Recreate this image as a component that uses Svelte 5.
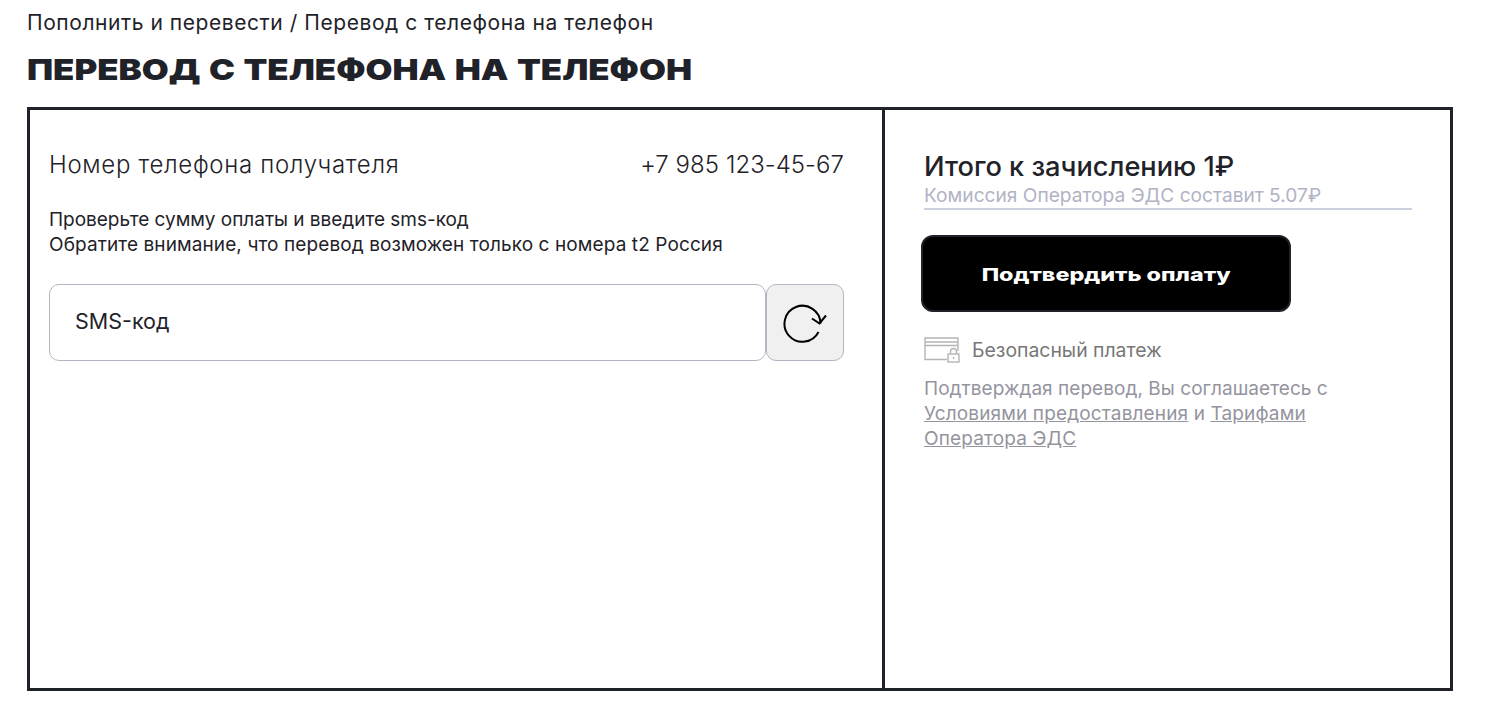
<script>
	let code = '';
</script>

<div class="page">
	<div class="crumbs">Пополнить и перевести / Перевод с телефона на телефон</div>
	<h1><span>ПЕРЕВОД С ТЕЛЕФОНА НА ТЕЛЕФОН</span></h1>

	<div class="box">
		<div class="left">
			<div class="phone-row">
				<span class="label">Номер телефона получателя</span>
				<span class="number">+7 985 123-45-67</span>
			</div>
			<p class="hint">
				<span class="first">Проверьте сумму оплаты и введите sms-код</span><br />
				Обратите внимание, что перевод возможен только с номера t2 Россия
			</p>
			<div class="sms">
				<input type="text" placeholder="SMS-код" bind:value={code} />
				<button class="refresh" aria-label="Отправить код повторно">
					<svg width="44" height="40" viewBox="0 0 44 40" fill="none" stroke="#000" stroke-width="2">
						<path d="M37.5 20.5 A18 18 0 1 0 35.5 29" />
						<path d="M29 15.5 L36.5 20.5 L43 12.5" />
					</svg>
				</button>
			</div>
		</div>

		<div class="right">
			<div class="total">Итого к зачислению 1₽</div>
			<div class="fee">Комиссия Оператора ЭДС составит 5.07₽</div>
			<button class="confirm"><span>Подтвердить оплату</span></button>
			<div class="secure">
				<svg width="36" height="26" viewBox="0 0 36 26" fill="none" stroke="#b5b5b5" stroke-width="1.4">
					<path d="M23 22.5 H1 V1 H34 V14" />
					<path d="M1 5 H34 M1 8.5 H34" />
					<rect x="24" y="17" width="11" height="8" fill="#fff" />
					<path d="M26.5 17 V14.5 a3 3 0 0 1 6 0 V17" />
					<path d="M29.5 20 v2" />
				</svg>
				<span>Безопасный платеж</span>
			</div>
			<p class="terms">
				Подтверждая перевод, Вы соглашаетесь с
				<a href="#terms">Условиями предоставления</a> и <a href="#tariffs">Тарифами Оператора ЭДС</a>
			</p>
		</div>
	</div>
</div>

<style>
	:global(body) {
		margin: 0;
		background: #fff;
	}

	.page {
		padding: 10px 47px 23px 27px;
		color: #1f2229;
		font-family: Inter, 'Noto Sans', sans-serif;
	}

	.crumbs {
		font-size: 21px;
		line-height: 26px;
		letter-spacing: 0.56px;
	}

	h1 {
		margin: 14px 0 17px;
		height: 40px;
		line-height: 40px;
		font-size: 29px;
		font-weight: 900;
		word-spacing: 1.3px;
		white-space: nowrap;
	}

	h1 span {
		display: inline-block;
		transform: scaleX(1.2);
		transform-origin: left center;
	}

	.box {
		display: grid;
		grid-template-columns: 855px 1fr;
		height: 584px;
		box-sizing: border-box;
		border: 3px solid #1f2229;
	}

	.left {
		border-right: 3px solid #1f2229;
		padding: 40px 38px 0 19px;
	}

	.phone-row {
		display: flex;
		justify-content: space-between;
		font-size: 24px;
		line-height: 30px;
		font-weight: 350;
	}

	.label {
		letter-spacing: 0.68px;
	}

	.number {
		letter-spacing: 0.05px;
	}

	.hint {
		margin: 27px 0 0;
		font-size: 19px;
		line-height: 25px;
		letter-spacing: 0.1px;
	}

	.first {
		letter-spacing: -0.025px;
	}

	.sms {
		display: flex;
		margin-top: 27px;
	}

	.sms input {
		flex: 1;
		min-width: 0;
		height: 77px;
		box-sizing: border-box;
		padding: 0 25px 4px;
		border: 1px solid #b0b7c3;
		border-radius: 10px;
		font: inherit;
		font-size: 21.5px;
		outline: none;
	}

	.sms input::placeholder {
		color: #1f2229;
		opacity: 1;
	}

	.refresh {
		width: 78px;
		height: 77px;
		padding: 0;
		display: flex;
		align-items: center;
		justify-content: center;
		background: #f0f0f0;
		border: 1px solid #b0b7c3;
		border-radius: 10px;
	}

	.right {
		padding: 41px 38px 0 39px;
	}

	.total {
		font-size: 27.2px;
		line-height: 32px;
		font-weight: 500;
	}

	.fee {
		font-size: 19.15px;
		line-height: 25px;
		color: #b1b3c4;
		border-bottom: 2px solid #cdd0df;
		padding-bottom: 0;
	}

	.confirm {
		display: flex;
		align-items: center;
		justify-content: center;
		width: 370px;
		height: 77px;
		margin: 25px 0 0 -3px;
		padding: 1px 0 0;
		background: #000;
		color: #fff;
		border: 2px solid #1f2229;
		border-radius: 12px;
		font: inherit;
		font-size: 18px;
		font-weight: 800;
	}

	.confirm span {
		display: inline-block;
		transform: scaleX(1.295);
	}

	.secure {
		display: flex;
		align-items: center;
		gap: 12px;
		margin-top: 25px;
		font-size: 19.4px;
		color: #777;
	}

	.terms {
		max-width: 420px;
		margin: 13px 0 0;
		font-size: 19px;
		line-height: 25px;
		letter-spacing: 0.05px;
		color: #94949e;
	}

	.terms a {
		color: inherit;
		letter-spacing: 0.15px;
	}
</style>
